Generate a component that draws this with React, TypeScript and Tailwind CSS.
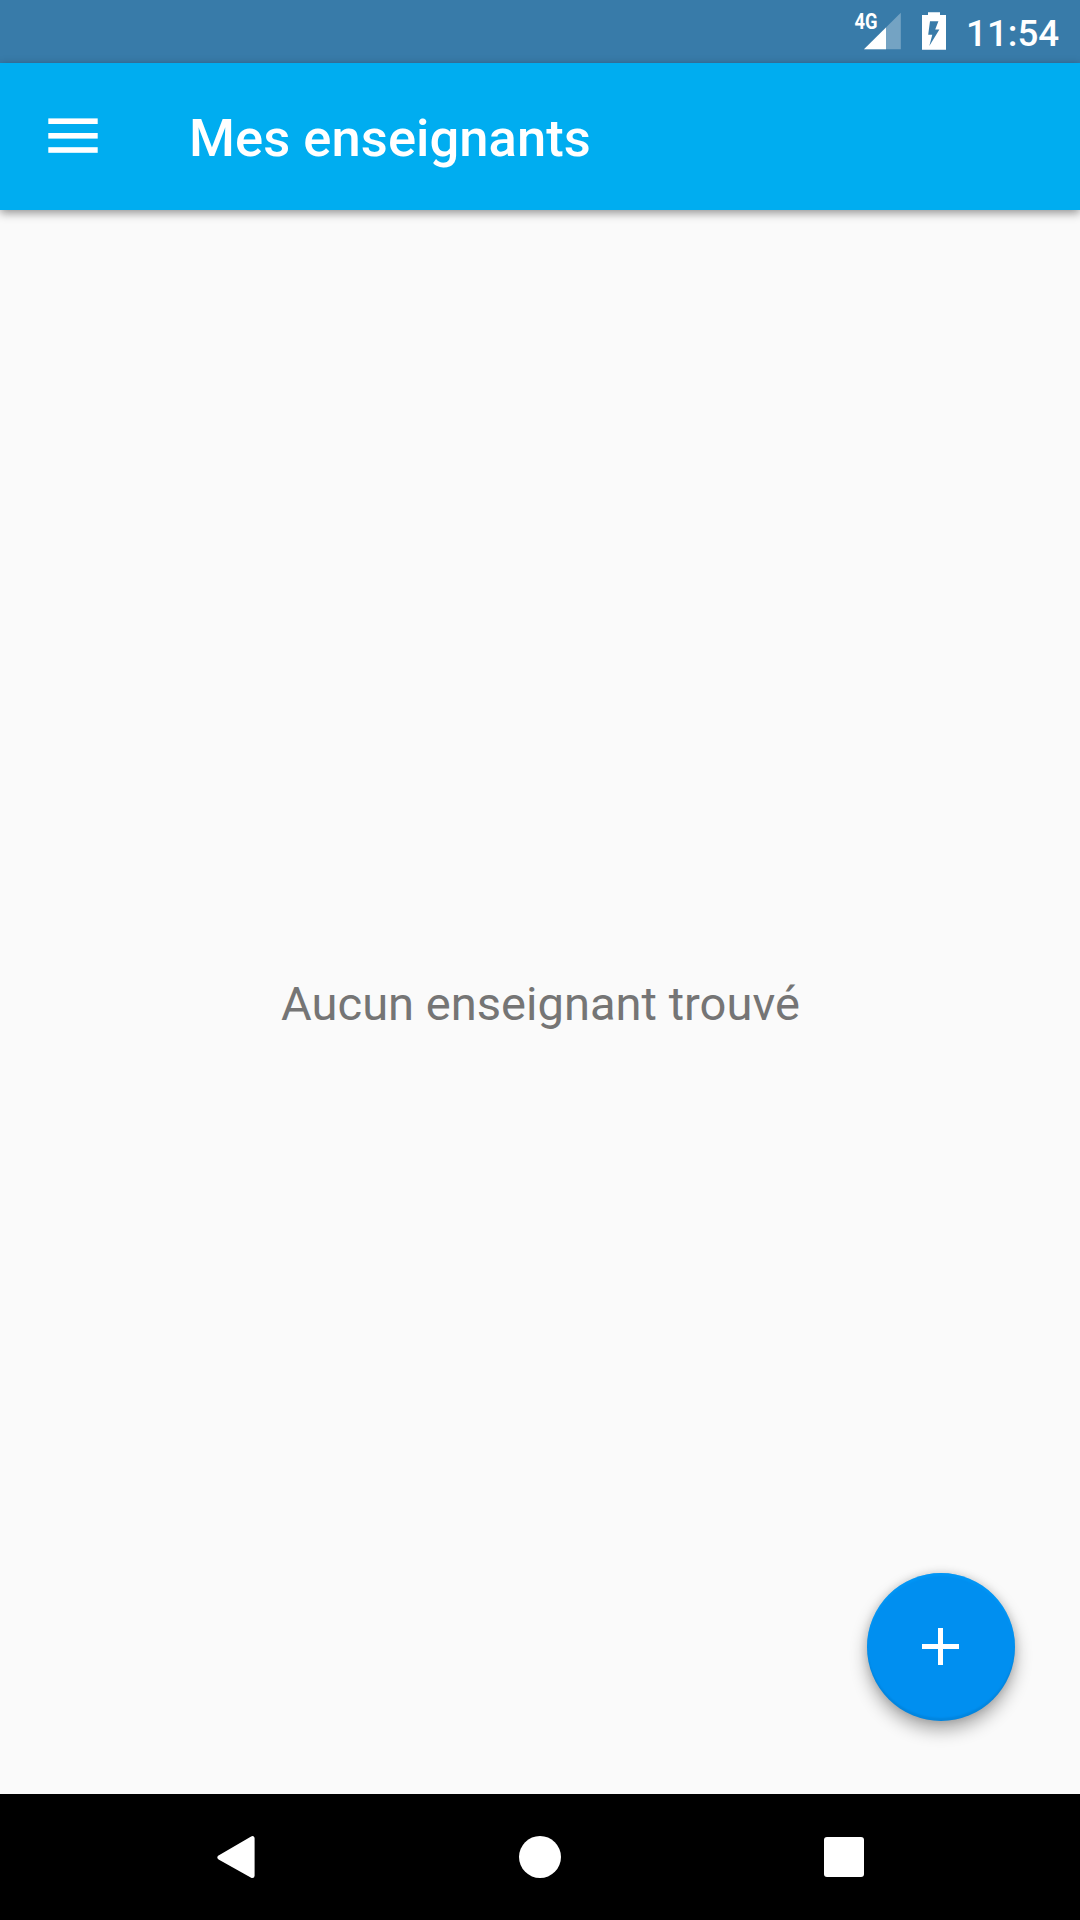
import React from 'react';

function SignalIcon() {
  return (
    <svg className="block h-[63px] w-[50px]" viewBox="854 0 50 63" aria-label="4G">
      <path d="M864 49.3 L900.8 12.7 V49.3 Z" fill="#ffffff" fillOpacity="0.3" />
      <path d="M864 49.3 L886 27.4 V49.3 Z" fill="#ffffff" />
      <text
        x="854.6"
        y="29"
        textLength="23"
        lengthAdjust="spacingAndGlyphs"
        fill="#ffffff"
        className="text-[21.5px] font-bold"
      >
        4G
      </text>
    </svg>
  );
}

function BatteryIcon() {
  return (
    <svg className="ml-[18px] block h-[63px] w-[24px]" viewBox="922 0 24 63" aria-label="Batterie">
      <path
        fill="#ffffff"
        fillRule="evenodd"
        d="M922 15 H928 V12.3 H940 V15 H946 V49.7 H922 Z M930 21.2 L928.2 34.8 H932.3 L929.3 46 L939.4 29.6 H935.2 L938.4 21.2 Z"
      />
    </svg>
  );
}

function StatusBar() {
  return (
    <div className="flex h-[63px] justify-end bg-[#387ba9]">
      <SignalIcon />
      <BatteryIcon />
      <span className="ml-[20px] w-[114px] pt-[15px] text-[36.75px] leading-[37px] font-medium text-white">11:54</span>
    </div>
  );
}

function AppBar() {
  return (
    <header className="relative flex h-[147px] bg-[#00adf0] shadow-[0_3px_9px_rgba(0,0,0,0.42)]">
      <button className="mt-[42px] ml-[42px] flex h-[63px] w-[63px]" aria-label="Menu">
        <svg className="block h-[63px] w-[63px]" viewBox="42 105 63 63" fill="#ffffff">
          <rect x="48.3" y="118.4" width="49.4" height="5.6" />
          <rect x="48.3" y="133" width="49.4" height="5.6" />
          <rect x="48.3" y="147.2" width="49.4" height="5.6" />
        </svg>
      </button>
      <h1 className="mt-[49px] ml-[84px] text-[52.5px] leading-[53px] font-medium tracking-[0.06px] whitespace-nowrap text-white">
        Mes enseignants
      </h1>
    </header>
  );
}

function AddButton() {
  return (
    <button
      aria-label="Ajouter"
      className="absolute right-[65px] bottom-[73px] flex h-[148px] w-[148px] items-center justify-center rounded-full bg-[#008ff0] pr-[2px] pb-[2px] shadow-[0_9px_17px_rgba(0,0,0,0.32),0_0_8px_rgba(0,0,0,0.14),inset_0_-3px_2px_rgba(0,0,0,0.07),inset_0_3px_2px_rgba(0,160,255,0.4)]"
    >
      <svg className="block h-[37px] w-[37px]" viewBox="0 0 37 37" fill="#ffffff" shapeRendering="crispEdges">
        <path d="M16 0 H21 V16 H37 V21 H21 V37 H16 V21 H0 V16 H16 Z" />
      </svg>
    </button>
  );
}

function NavigationBar() {
  return (
    <nav className="flex h-[126px] items-center bg-black pl-[217px]">
      <svg className="block h-[44px] w-[38px]" viewBox="217 1835 38 44" aria-label="Retour">
        <path
          d="M219.7 1857.4 L252.3 1838.4 V1875.8 Z"
          fill="#ffffff"
          stroke="#ffffff"
          strokeWidth="4.6"
          strokeLinejoin="round"
        />
      </svg>
      <div className="ml-[264px] h-[42px] w-[42px] rounded-full bg-white" />
      <div className="ml-[263px] h-[40px] w-[40px] rounded-[3px] bg-white" />
    </nav>
  );
}

export default function App() {
  return (
    <div className="flex h-[1920px] w-[1080px] flex-col overflow-hidden bg-[#fafafa] font-['Roboto',sans-serif]">
      <StatusBar />
      <AppBar />
      <main className="relative flex flex-1 items-center justify-center">
        <p className="pt-[3px] pl-[1px] text-[47.1px] leading-[47px] whitespace-nowrap text-[#757575]">
          Aucun enseignant trouvé
        </p>
        <AddButton />
      </main>
      <NavigationBar />
    </div>
  );
}
